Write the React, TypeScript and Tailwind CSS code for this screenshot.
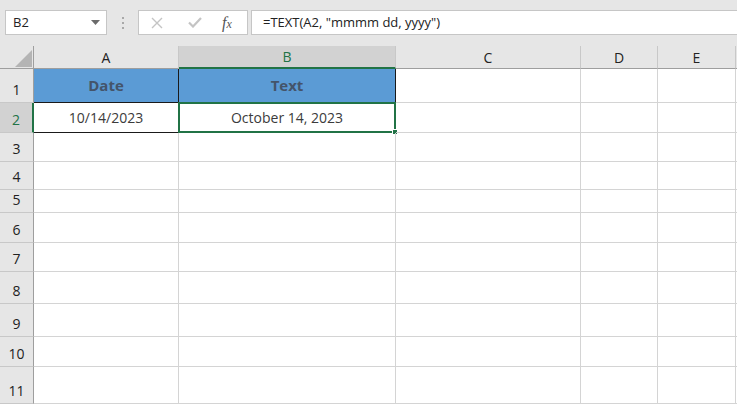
import React from 'react';

const cols = [
  { key: 'A', w: 'w-[145px]' },
  { key: 'B', w: 'w-[217px]' },
  { key: 'C', w: 'w-[185px]' },
  { key: 'D', w: 'w-[77px]' },
  { key: 'E', w: 'w-[78px]' },
];

const rowHeights = [
  'h-[34px]', 'h-[30px]', 'h-[29px]', 'h-[28px]', 'h-[23px]', 'h-[30px]',
  'h-[29px]', 'h-[32px]', 'h-[33px]', 'h-[30px]', 'h-[37px]',
];

const font = { fontFamily: '"Open Sans", "Noto Sans", sans-serif' };

const Toolbar = () => (
  <div className="h-[46px] bg-[#e6e6e6] flex items-start pt-[10px] pl-[5px]">
    <div className="w-[102px] h-[25px] bg-white border border-[#c6c6c6] flex items-center justify-between pl-[7px] pr-[6px] text-[13px] text-[#222]">
      <span>B2</span>
      <svg width="9" height="5" viewBox="0 0 9 5"><path d="M0 0 L9 0 L4.5 5 Z" fill="#6b6b6b" /></svg>
    </div>
    <div className="w-[31px] h-[25px] flex flex-col items-center justify-center gap-[3px]">
      <span className="w-[2px] h-[2px] bg-[#a8a8a8]" />
      <span className="w-[2px] h-[2px] bg-[#a8a8a8]" />
      <span className="w-[2px] h-[2px] bg-[#a8a8a8]" />
    </div>
    <div className="w-[110px] h-[25px] bg-white border border-[#c6c6c6] flex items-center">
      <svg className="ml-[12px]" width="12" height="12" viewBox="0 0 12 12"><path d="M1 1 L11 11 M11 1 L1 11" stroke="#c4c4c4" strokeWidth="1.4" /></svg>
      <svg className="ml-[25px]" width="14" height="11" viewBox="0 0 14 11"><path d="M1 5.5 L5 9.5 L13 1" stroke="#c4c4c4" strokeWidth="2.2" fill="none" /></svg>
      <span className="ml-[20px] text-[16px] italic text-[#555] leading-none" style={{ fontFamily: '"Liberation Serif", serif' }}>f<span className="text-[12px]">x</span></span>
    </div>
    <div className="ml-[3px] flex-1 h-[25px] bg-white border-y border-l border-[#c6c6c6] flex items-center pl-[11px] text-[13px] text-[#222]">
      =TEXT(A2, "mmmm dd, yyyy")
    </div>
  </div>
);

const HeaderRow = () => (
  <div className="flex h-[23px] bg-[#e6e6e6]">
    <div className="w-[34px] h-full border-r border-b border-[#9e9e9e] relative">
      <svg className="absolute right-[1px] bottom-[1px]" width="17" height="17" viewBox="0 0 17 17"><path d="M17 0 L17 17 L0 17 Z" fill="#b4b4b4" /></svg>
    </div>
    {cols.map(c => (
      <div
        key={c.key}
        className={`${c.w} h-full flex items-center justify-center text-[14px] border-r border-[#c8c8c8] ${c.key === 'B' ? 'bg-[#d2d2d2] text-[#217346] border-b-2 border-b-[#217346]' : 'text-[#222] border-b border-b-[#9e9e9e]'}`}
      >
        {c.key}
      </div>
    ))}
    <div className="flex-1 h-full border-b border-[#9e9e9e]" />
  </div>
);

const cellContent = (r: number, c: string) => {
  if (r === 1 && c === 'A') return 'Date';
  if (r === 1 && c === 'B') return 'Text';
  if (r === 2 && c === 'A') return '10/14/2023';
  if (r === 2 && c === 'B') return 'October 14, 2023';
  return '';
};

const Row = ({ r, h }: { r: number; h: string }) => {
  const sel = r === 2;
  return (
    <div className={`flex ${h}`}>
      <div className={`w-[34px] h-full flex items-end justify-center pb-[2px] text-[14px] border-b border-[#c8c8c8] ${sel ? 'bg-[#d2d2d2] text-[#217346] border-r-2 border-r-[#217346]' : 'bg-[#e6e6e6] text-[#222] border-r border-r-[#9e9e9e]'}`}>
        {r}
      </div>
      {cols.map(c => {
        const inRange = (r === 1 || r === 2) && (c.key === 'A' || c.key === 'B');
        const head = r === 1 && inRange;
        return (
          <div
            key={c.key}
            className={`${c.w} h-full relative flex items-center justify-center ${inRange ? 'border-r border-b border-[#1a1a1a]' : 'border-r border-b border-[#d4d4d4]'} ${head ? 'bg-[#5b9bd5] font-bold text-[15px] text-[#44546a]' : 'text-[14px] text-[#3b3b3b]'}`}
          >
            {cellContent(r, c.key)}
            {sel && c.key === 'B' && (
              <div className="absolute -left-[1px] -top-[1px] -right-[1px] -bottom-[1px] border-2 border-[#217346]">
                <div className="absolute -right-[4px] -bottom-[4px] w-[6px] h-[6px] bg-[#217346] border border-white" />
              </div>
            )}
          </div>
        );
      })}
      <div className="flex-1 h-full border-b border-[#d4d4d4]" />
    </div>
  );
};

export default function App() {
  return (
    <div className="w-[737px] h-[404px] overflow-hidden bg-white" style={font}>
      <Toolbar />
      <HeaderRow />
      {rowHeights.map((h, i) => (
        <Row key={i} r={i + 1} h={h} />
      ))}
    </div>
  );
}
